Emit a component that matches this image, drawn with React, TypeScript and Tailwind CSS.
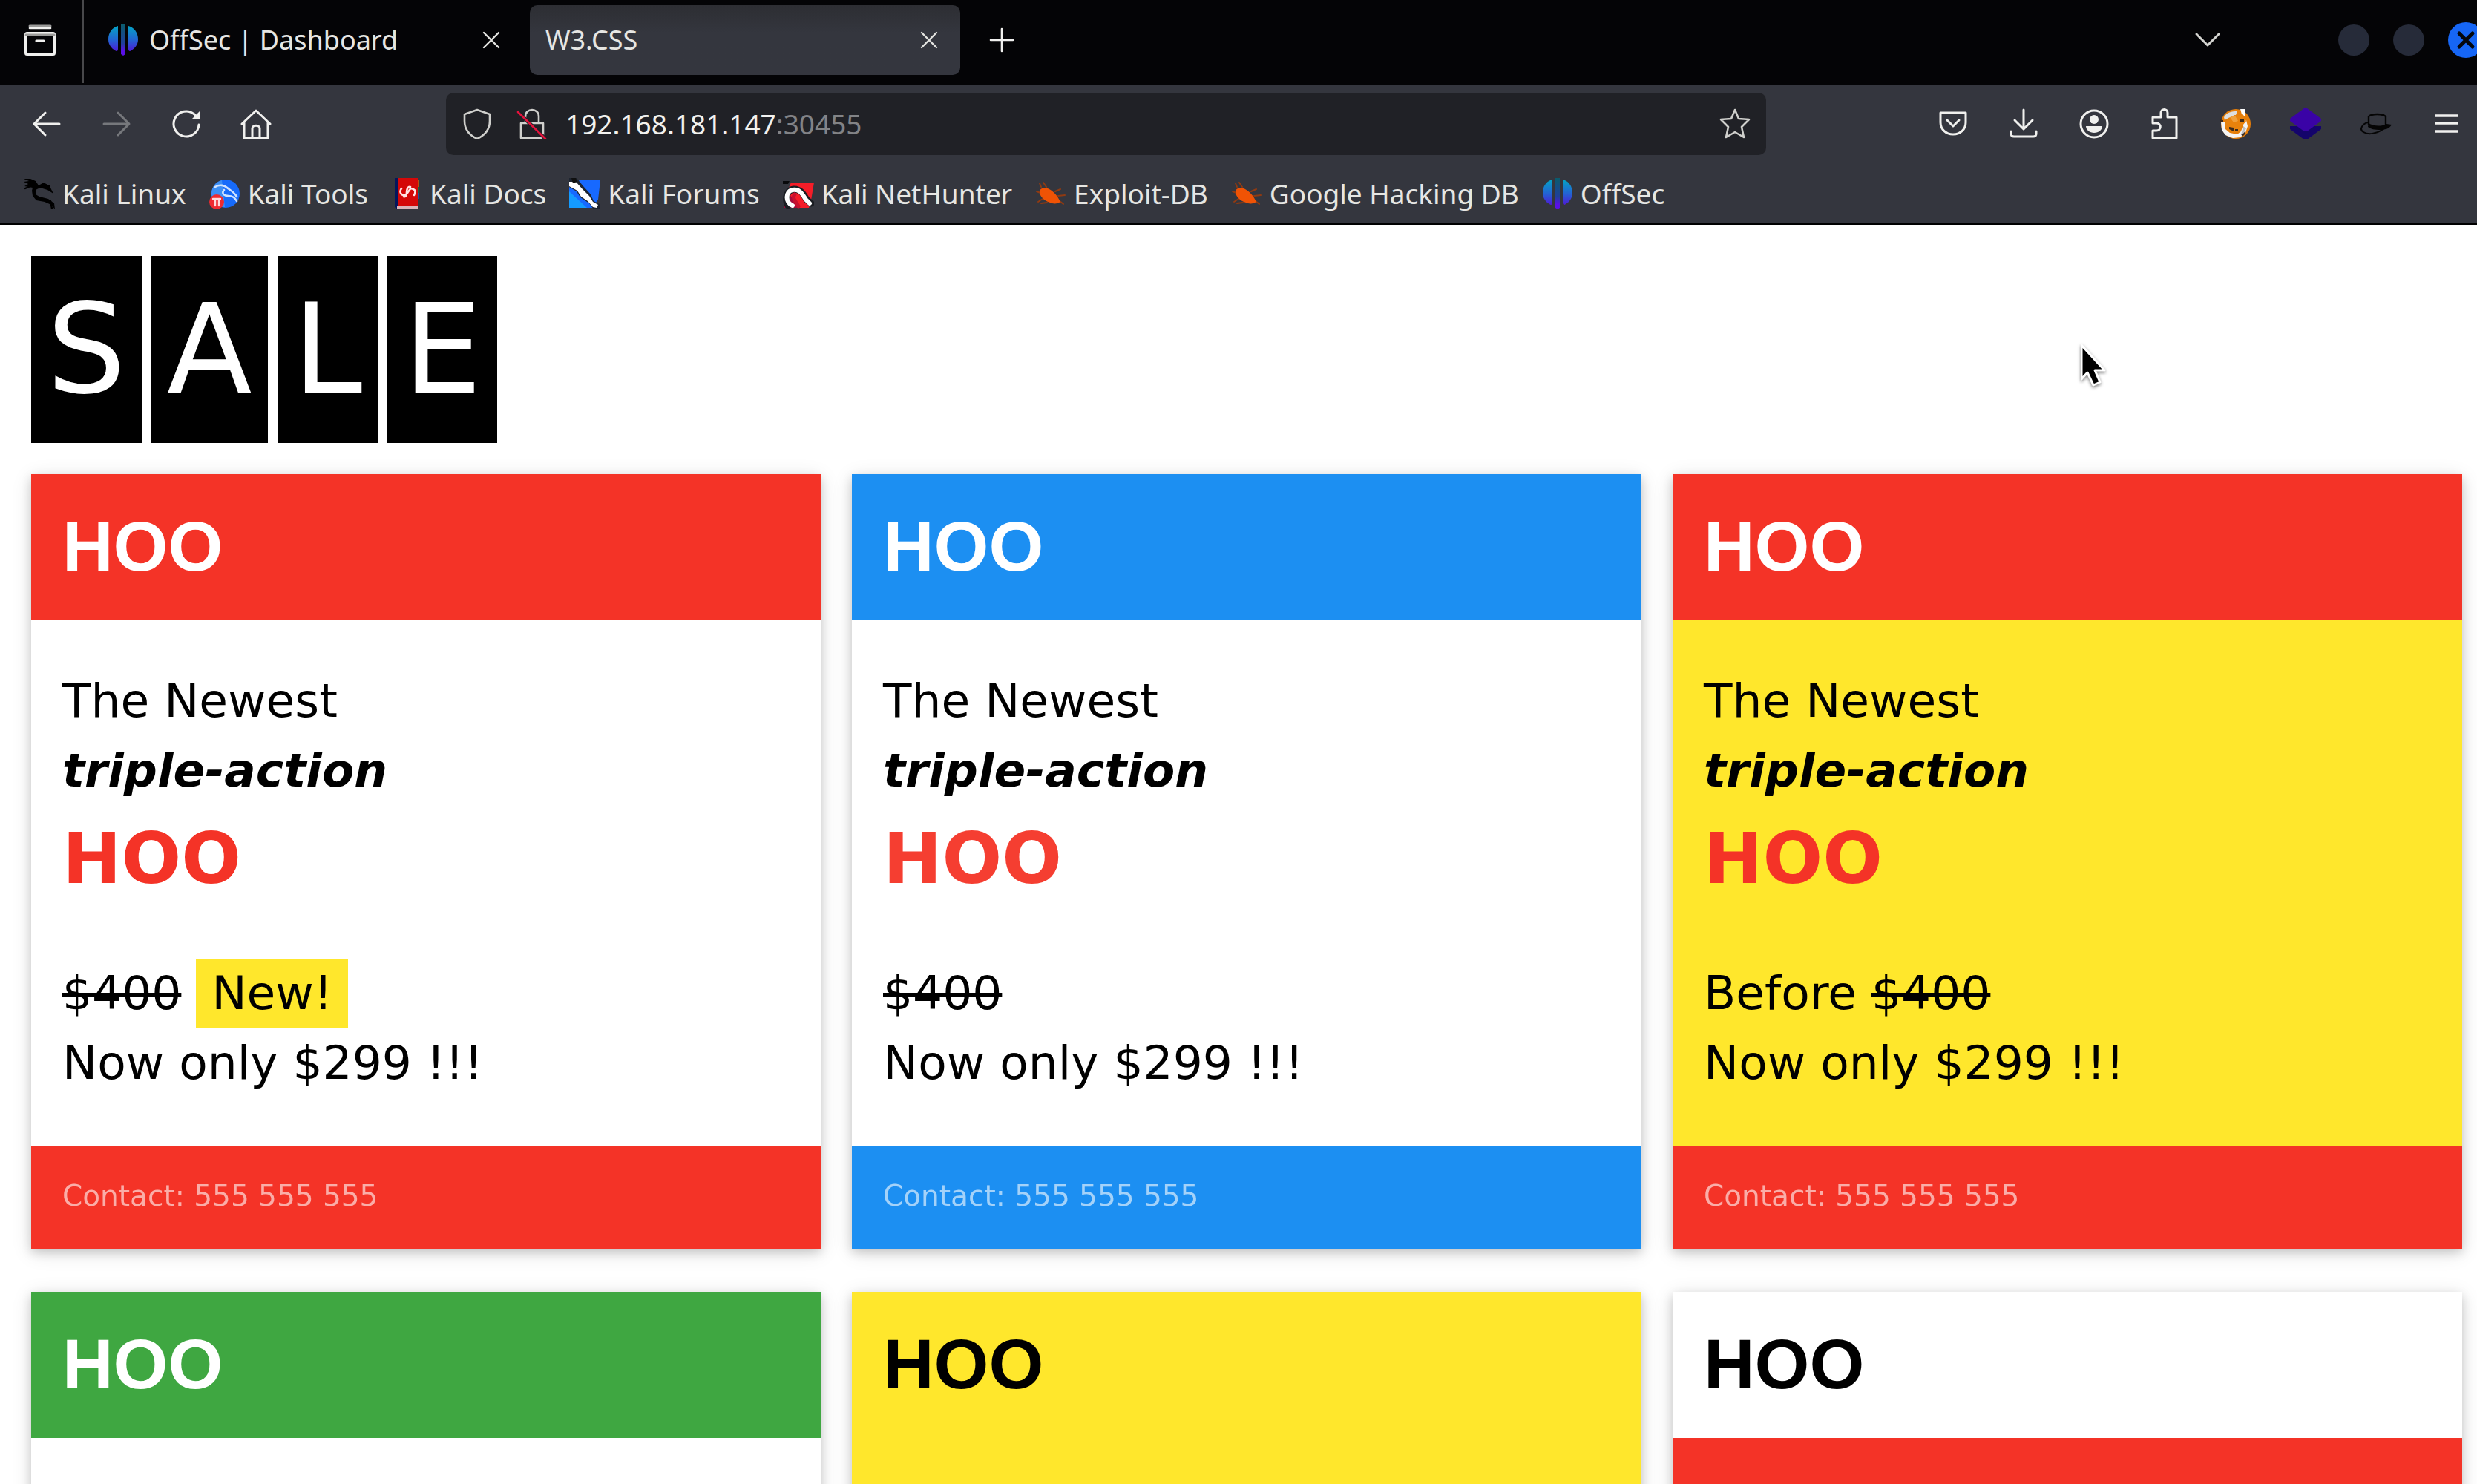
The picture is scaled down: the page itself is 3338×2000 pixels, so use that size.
import React from "react";
import type { ReactNode } from "react";

type GlyphProps = { children: ReactNode; className?: string };

function Glyph({ children, className = "text-[#f0f0ee]" }: GlyphProps) {
  return (
    <svg
      viewBox="0 0 42 42"
      className={`size-[42px] shrink-0 ${className}`}
      fill="none"
      stroke="currentColor"
      strokeWidth="3"
      strokeLinecap="round"
      strokeLinejoin="round"
      aria-hidden="true"
    >
      {children}
    </svg>
  );
}

function OffSecLogo() {
  return (
    <Glyph>
      <defs>
        <linearGradient id="offsec" x1="0" y1="0" x2="0" y2="42" gradientUnits="userSpaceOnUse">
          <stop offset="0.05" stopColor="#04a3c4" />
          <stop offset="0.5" stopColor="#2363d4" />
          <stop offset="0.9" stopColor="#5312d6" />
        </linearGradient>
        <linearGradient id="offsec-bar" x1="0" y1="0" x2="0" y2="42" gradientUnits="userSpaceOnUse">
          <stop offset="0" stopColor="#0b5b6c" />
          <stop offset="0.6" stopColor="#1f3f9c" />
          <stop offset="0.85" stopColor="#5a10e6" />
        </linearGradient>
      </defs>
      <g stroke="none">
        <path d="M14 2v31c0 3-2 4-4 2C5 32 1 27 1 20 1 11 6 4 14 2z" fill="url(#offsec)" />
        <path d="M28 2v31c0 3 2 4 4 2 5-3 9-8 9-15C41 11 36 4 28 2z" fill="url(#offsec)" />
        <path d="M18 0h6v40l-3 2-3-2z" fill="url(#offsec-bar)" />
      </g>
    </Glyph>
  );
}

function CloseGlyph() {
  return (
    <Glyph className="text-[#e4e4e0]">
      <path d="M11 11l20 20M31 11L11 31" strokeWidth="2.4" />
    </Glyph>
  );
}

function KaliDragon() {
  return (
    <Glyph className="text-black">
      <path
        d="M0 1h9l7 3 4 6 7-4 8 5 5 10-8-5-10-3-6 3 0 6 5 3 12 3 8 6 1 8-5-6-9-4-11-2-5-6-1-7 1-4-11-2 5-3-6-3 7-1z"
        fill="currentColor"
        stroke="none"
      />
      <path d="M36 31l2 10M2 14l7-3M28 9l6 2" strokeWidth="2.4" />
    </Glyph>
  );
}

function KaliToolsLogo() {
  return (
    <Glyph>
      <g stroke="none">
        <circle cx="22" cy="21" r="19" fill="#176bfa" />
        <path d="M3 21c0-9 6-16 14-18l4 36C11 39 3 31 3 21z" fill="#3c8ff5" />
      </g>
      <path d="M8 12c6-4 13-2 16 1s9 5 13 12M20 16c-4 5 0 8 6 8s9 3 11 7" stroke="#cfe2ff" strokeWidth="2.6" />
      <circle cx="10" cy="32" r="10" fill="#ee2a30" stroke="none" />
      <path d="M5 28h10M8 28v9M13 28v9" stroke="#ffd9da" strokeWidth="2.4" />
    </Glyph>
  );
}

function KaliDocsLogo() {
  return (
    <Glyph>
      <g stroke="none">
        <path d="M5 0h5v42H8l-3-3z" fill="#04165c" />
        <path d="M9 0h27v38H9z" fill="#d40808" />
        <path d="M8 38h28v4H8z" fill="#d9b4b8" />
        <path d="M36 2h2v10h-2z" fill="#b55312" />
        <path d="M36 12h2v8h-2z" fill="#17683f" />
        <path d="M36 20h2v8h-2z" fill="#1c4c9e" />
      </g>
      <path d="M14 14c-4 6 1 11 6 8s4-10 10-7c3 1 3 5 1 8M26 12c-3-1-5 3-5 7s-1 7-4 6" stroke="#ffe4e4" strokeWidth="2.6" />
    </Glyph>
  );
}

function KaliForumsLogo() {
  return (
    <Glyph>
      <g stroke="none">
        <path d="M14 3h28l-3 26-8 11H0V10z" fill="#1769ff" />
        <path d="M0 18l24 22H0z" fill="#149bff" />
        <path d="M0 0h10l9 11 10 11 4 9 8 4v6l-8 1-6-8-12-8-5-8-10-6z" fill="#1d2430" />
        <path d="M0 5l9 0 8 9 10 10 5 8 7 4-2 4-5-1-7-8-9-6-5-8-11-6z" fill="#ffffff" />
        <path d="M3 0h6l2 5-6 2z" fill="#101010" />
      </g>
    </Glyph>
  );
}

function NetHunterLogo() {
  return (
    <Glyph>
      <g stroke="none">
        <path d="M11 6h31l-4 24-3 10H2l3-20z" fill="#f51d28" />
        <path d="M1 30l8-8 14 18H1z" fill="#a50b3c" />
        <path d="M0 4h9l-2 4H0z" fill="#08090b" />
      </g>
      <path d="M7 37c-5-9-2-21 8-22 9 0 13 7 17 14l6 5" stroke="#1a1d22" strokeWidth="9" />
      <path d="M13 37C3 33 3 18 13 16s14 7 18 13l5 5" stroke="#ffffff" strokeWidth="6" />
      <path d="M16 22c-4 5 0 7 5 16" stroke="#c8102f" strokeWidth="5" />
    </Glyph>
  );
}

function ExploitLogo() {
  return (
    <Glyph className="text-[#8f3a12]">
      <path d="M8 12L6 7M15 12l-4-6M27 18l7-3M31 24l9-1M33 31l5 4M7 20l-5-2M10 28l-6 4M16 33l-8 1" strokeWidth="2" />
      <path d="M6 17c2-4 8-5 13-2 7 4 11 9 15 17-4 3-10 3-14 1C12 31 5 24 6 17z" fill="#f05305" stroke="none" />
    </Glyph>
  );
}

function FoxGlyph() {
  return (
    <Glyph>
      <g stroke="none">
        <circle cx="22" cy="21" r="20" fill="#e57e0a" />
        <path d="M6 12C10 5 16 4 24 4l-2 5-10 4-5 3z" fill="#dedede" />
        <path d="M28 1h6l1 10-5-3z" fill="#ffffff" />
        <path d="M2 18l5 0 1 10 6 5 10 2 5-4 3-9 4-6 2 8-3 9-7 6-10 1-10-4-5-7z" fill="#f4f4f4" />
        <path d="M10 16l10-7 12 2 4 7-6 5-2 8-10 2-7-5-4-5z" fill="#e8820c" />
        <path d="M14 12l7-2 4 7-6 2z" fill="#f0a03c" />
        <path d="M27 15h6v3h-6zM13 25l6 1v5l-6-3zM21 28h4v3h-4zM0 15l5 1v3H0zM29 35l6-4v3l-4 4z" fill="#3c2a1c" />
        <path d="M32 24l4 3-3 6-4 3z" fill="#bdbdbd" />
      </g>
    </Glyph>
  );
}

const bookmarks: { label: string; icon: ReactNode }[] = [
  { label: "Kali Linux", icon: <KaliDragon /> },
  { label: "Kali Tools", icon: <KaliToolsLogo /> },
  { label: "Kali Docs", icon: <KaliDocsLogo /> },
  { label: "Kali Forums", icon: <KaliForumsLogo /> },
  { label: "Kali NetHunter", icon: <NetHunterLogo /> },
  { label: "Exploit-DB", icon: <ExploitLogo /> },
  { label: "Google Hacking DB", icon: <ExploitLogo /> },
  { label: "OffSec", icon: <OffSecLogo /> },
];

const navButtons: { label: string; icon: ReactNode }[] = [
  { label: "Back", icon: <Glyph><path d="M38 21H5M19 6L4 21l15 15" /></Glyph> },
  { label: "Forward", icon: <Glyph className="text-[#76787c]"><path d="M4 21h33M23 6l15 15-15 15" /></Glyph> },
  {
    label: "Reload",
    icon: (
      <Glyph>
        <path d="M38 22a17 17 0 1 1-6-14l4 4" />
        <path d="M39 4v11H28z" fill="currentColor" stroke="none" />
      </Glyph>
    ),
  },
  {
    label: "Home",
    icon: (
      <Glyph>
        <path d="M2 21L21 3l19 18M5 19v21h32V19" />
        <path d="M16 39V27c0-5 10-5 10 0v12" />
      </Glyph>
    ),
  },
];

const actionButtons: { label: string; icon: ReactNode }[] = [
  {
    label: "Save to Pocket",
    icon: <Glyph><path d="M4 6h34v13c0 9-7 16-17 16S4 28 4 19z" /><path d="M13 16l8 8 8-8" /></Glyph>,
  },
  {
    label: "Downloads",
    icon: <Glyph><path d="M21 2v25M9 16l12 12 12-12M4 31v3c0 2 1 4 4 4h26c3 0 4-2 4-4v-3" /></Glyph>,
  },
  {
    label: "Account",
    icon: (
      <Glyph>
        <circle cx="21" cy="21" r="18" />
        <circle cx="21" cy="15" r="6" fill="currentColor" stroke="none" />
        <path d="M10 24h22c0 5-5 9-11 9s-11-4-11-9z" fill="currentColor" stroke="none" />
      </Glyph>
    ),
  },
  {
    label: "Extensions",
    icon: (
      <Glyph>
        <path d="M5 12h11V6c0-6 9-6 9 0v6h12v28H5V30h5c7 0 7-10 0-10H5z" />
      </Glyph>
    ),
  },
  { label: "FoxyProxy", icon: <FoxGlyph /> },
  {
    label: "Wappalyzer",
    icon: (
      <Glyph>
        <path d="M0 24h42v4L23 42h-4L0 28z" fill="#14046b" stroke="none" />
        <path d="M19 0h4l19 14v3L23 31h-4L0 17v-3z" fill="#3a03a6" stroke="none" />
      </Glyph>
    ),
  },
  {
    label: "Hat",
    icon: (
      <Glyph className="text-[#050505]">
        <path d="M11 22V11c4-4 19-4 23 0v12" strokeWidth="2.4" />
        <path d="M11 20c6 4 17 5 24 1l7 1c-3 5-8 7-15 7-8 0-13-1-17-4z" fill="currentColor" stroke="none" />
        <path d="M10 19C2 21-2 29 4 32c6 4 18 2 25-3" strokeWidth="2" />
      </Glyph>
    ),
  },
  {
    label: "Menu",
    icon: <Glyph><path d="M5 10h32M5 20h32M5 31h32" strokeLinecap="butt" strokeWidth="3.6" /></Glyph>,
  },
];

type Card = {
  header: string;
  body: string;
  footer: string;
  accent: string;
  before?: boolean;
  isNew?: boolean;
};

const cards: Card[] = [
  { header: "bg-[#f43327] text-white", body: "bg-white", footer: "bg-[#f43327] text-white", accent: "text-[#f43327]", isNew: true },
  { header: "bg-[#1c8ff2] text-white", body: "bg-white", footer: "bg-[#1c8ff2] text-white", accent: "text-[#f53e31]" },
  { header: "bg-[#f43327] text-white", body: "bg-[#ffe72c]", footer: "bg-[#f43327] text-white", accent: "text-[#f43327]", before: true },
  { header: "bg-[#3fa741] text-white", body: "bg-white", footer: "bg-[#3fa741] text-white", accent: "text-[#f43327]" },
  { header: "bg-[#ffe72c] text-black", body: "bg-[#ffe72c]", footer: "bg-[#ffe72c] text-black", accent: "text-[#f43327]" },
  { header: "bg-white text-black", body: "bg-[#f43327]", footer: "bg-white text-black", accent: "text-white" },
];

function SaleCard({ card }: { card: Card }) {
  return (
    <article className="shadow-[0_5px_13px_rgba(0,0,0,0.16),0_5px_26px_rgba(0,0,0,0.12)]">
      <header className={`px-[42px] pt-[26px] pb-7 ${card.header}`}>
        <h2 className="font-['Liberation_Sans',sans-serif] text-[95px] leading-[143px] font-bold">HOO</h2>
      </header>
      <div className={`px-[42px] pt-[62px] pb-16 text-[63px] leading-[94px] text-black ${card.body}`}>
        <p>
          The Newest
          <br />
          <b>
            <i>triple-action</i>
          </b>
          <br />
          <b className={`block text-[95px] leading-[143px] ${card.accent}`}>HOO</b>
        </p>
        <p className="mt-[63px]">
          {card.before && "Before "}
          <s>$400</s>
          {card.isNew && <> <span className="inline-block bg-[#ffe72c] px-[21px]">New!</span></>}
          <br />
          Now only $299 !!!
        </p>
      </div>
      <footer className={`px-[42px] pt-[38px] pb-[42px] ${card.footer}`}>
        <p className="text-[39px] leading-[59px] opacity-60">Contact: 555 555 555</p>
      </footer>
    </article>
  );
}

export default function App() {
  return (
    <div className="flex h-screen flex-col overflow-hidden bg-white font-['Noto_Sans',sans-serif] text-[37px] leading-[60px] text-[#e6e6e3]">
      <div className="flex h-[114px] shrink-0 items-start bg-[#040406]">
        <button aria-label="Recent browsing" className="flex h-[112px] w-[113px] items-center justify-center border-r-2 border-[#48484a] pr-1 pb-1">
          <Glyph>
            <path d="M7 2h28" strokeWidth="3" stroke="#9a9a98" />
            <path d="M7 5h28" strokeWidth="2.6" />
            <rect x="1.5" y="11.5" width="39" height="29" rx="2" />
            <path d="M2 14h38" stroke="#9a9a98" />
            <path d="M16 22h10" strokeWidth="3.2" />
          </Glyph>
        </button>
        <div role="tablist" className="mt-[7px] ml-[11px] flex h-[94px] gap-[10px] text-[36px]">
          <div role="tab" aria-selected="false" className="flex w-[580px] items-center px-[21px]">
            <OffSecLogo />
            <span className="ml-[14px] flex-1 truncate">OffSec | Dashboard</span>
            <button aria-label="Close OffSec tab"><CloseGlyph /></button>
          </div>
          <div role="tab" aria-selected="true" className="flex w-[580px] items-center rounded-[10px] bg-linear-to-b from-[#2d2e33] to-[#34363e] to-40% px-[21px]">
            <span className="flex-1 truncate">W3.CSS</span>
            <button aria-label="Close W3.CSS tab"><CloseGlyph /></button>
          </div>
        </div>
        <button aria-label="New tab" className="mt-[7px] ml-[35px] flex h-[94px] items-center">
          <Glyph><path d="M21 6v30M6 21h30" strokeWidth="2.6" /></Glyph>
        </button>
        <div className="mt-[7px] -mr-[9px] ml-auto flex h-[94px] items-center">
          <button aria-label="List all tabs" className="mr-[155px]">
            <Glyph className="text-[#d4d4d0]"><path d="M6 13l15 15 15-15" /></Glyph>
          </button>
          <div className="flex items-center gap-8">
            <button aria-label="Minimize" className="size-[42px] rounded-full bg-[#262b39]" />
            <button aria-label="Maximize" className="size-[42px] rounded-full bg-[#262b39]" />
            <button aria-label="Close window" className="flex size-12 items-center justify-center rounded-full bg-[#1666f5]">
              <svg viewBox="0 0 48 48" className="size-12" fill="none" stroke="#05070c" strokeWidth="5" strokeLinecap="round" aria-hidden="true">
                <path d="M15 15l18 18M33 15L15 33" />
              </svg>
            </button>
          </div>
        </div>
      </div>

      <div className="shrink-0 border-b-2 border-black bg-[#34363e]">
        <nav aria-label="Browser" className="flex h-[106px] items-center pr-5 pl-[42px]">
          <div className="flex gap-[52px]">
            {navButtons.map((b) => (
              <button key={b.label} aria-label={b.label}>{b.icon}</button>
            ))}
          </div>
          <div className="mr-[231px] ml-[235px] flex h-[84px] flex-1 items-center rounded-[10px] bg-[#202126] px-[21px]">
            <Glyph className="text-[#cfcfcc]">
              <path d="M21 2l17 6v9c0 11-6 19-17 24C10 36 4 28 4 17V8z" strokeWidth="2.6" />
            </Glyph>
            <span className="ml-8">
              <Glyph className="text-[#cfcfcc]">
                <path d="M12 19v-8c0-12 18-12 18 0v8M6 20h30v20H6z" strokeWidth="2.6" />
                <path d="M3 6l37 36" stroke="#202126" strokeWidth="5" />
                <path d="M2 5l37 36" stroke="#e4123c" strokeWidth="2.6" />
              </Glyph>
            </span>
            <label className="ml-6 flex flex-1 items-center">
              <span className="sr-only">Address</span>
              <input className="field-sizing-content h-[60px] text-[#f2f2ef] outline-none" defaultValue="192.168.181.147" />
              <span className="text-[#828386]">:30455</span>
            </label>
            <button aria-label="Bookmark this page">
              <Glyph className="text-[#cfcfcc]">
                <path d="M21 2l5 12 14 1-10 10 3 14-12-7-12 7 3-14L2 15l14-1z" strokeWidth="2.6" />
              </Glyph>
            </button>
          </div>
          <div className="flex gap-[53px]">
            {actionButtons.map((b) => (
              <button key={b.label} aria-label={b.label}>{b.icon}</button>
            ))}
          </div>
        </nav>
        <div className="flex h-[81px] items-center gap-[31px] pl-8">
          {bookmarks.map((b) => (
            <a key={b.label} href="#" className="flex items-center gap-[10px] whitespace-nowrap">
              {b.icon}
              {b.label}
            </a>
          ))}
        </div>
      </div>

      <main className="relative min-h-0 flex-1 overflow-x-hidden overflow-y-auto pt-[42px] pr-5 pl-[42px] font-['DejaVu_Sans',sans-serif] [scrollbar-width:none]">
        <h1 className="flex gap-[13px] text-[168px] leading-[252px] text-white">
          {["S", "A", "L", "E"].map((letter) => (
            <span key={letter} className="bg-black px-[21px]">{letter}</span>
          ))}
        </h1>
        <section className="mt-[42px] grid grid-cols-3 gap-x-[42px] gap-y-[58px] pb-[58px]">
          {cards.map((card, i) => (
            <SaleCard key={i} card={card} />
          ))}
        </section>
        <svg viewBox="0 0 34 60" className="absolute top-[158px] left-[84%] h-[60px] w-[34px] drop-shadow-[0_2px_2px_rgba(0,0,0,0.5)]" aria-hidden="true">
          <path d="M1 4v46l8-9 8 17 9-4-7-16h13z" fill="#000" stroke="#fff" strokeWidth="3" strokeLinejoin="round" />
        </svg>
      </main>
    </div>
  );
}
